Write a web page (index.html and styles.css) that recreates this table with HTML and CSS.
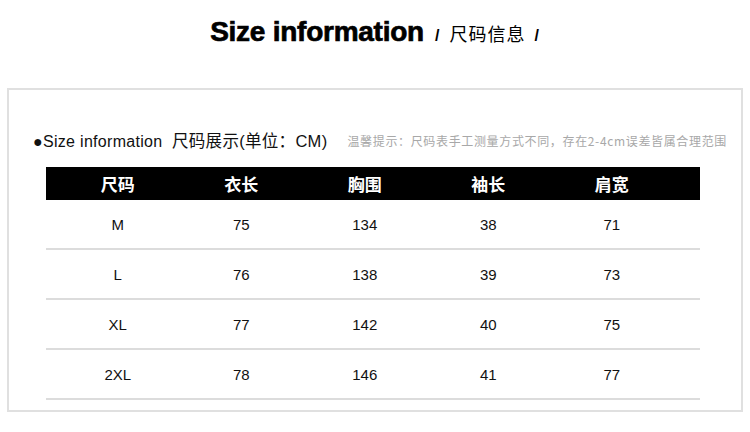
FILE: index.html
```html
<!DOCTYPE html>
<html lang="zh-CN">
<head>
<meta charset="utf-8">
<link rel="stylesheet" href="styles.css">
</head>
<body>
<div class="page">
  <h1 class="title"><span class="title-en">Size information</span><span class="title-cn"><span class="slash">/</span>尺码信息<span class="slash">/</span></span></h1>
  <div class="box">
    <div class="caption">
      <span class="cap-main">●Size information&nbsp;&nbsp;<span class="cap-cn">尺码展示(单位：CM)</span></span>
      <span class="cap-note">温馨提示：尺码表手工测量方式不同，存在2-4cm误差皆属合理范围</span>
    </div>
    <div class="table">
      <div class="row head"><span>尺码</span><span>衣长</span><span>胸围</span><span>袖长</span><span>肩宽</span></div>
      <div class="row"><span>M</span><span>75</span><span>134</span><span>38</span><span>71</span></div>
      <div class="row"><span>L</span><span>76</span><span>138</span><span>39</span><span>73</span></div>
      <div class="row"><span>XL</span><span>77</span><span>142</span><span>40</span><span>75</span></div>
      <div class="row"><span>2XL</span><span>78</span><span>146</span><span>41</span><span>77</span></div>
    </div>
  </div>
</div>
</body>
</html>
```
FILE: styles.css
```css
* { box-sizing: border-box; margin: 0; padding: 0; }
html, body { background: #fff; }
body { width: 750px; height: 432px; overflow: hidden; font-family: "Liberation Sans", "Noto Sans CJK SC", sans-serif; color: #111; }
.page { padding-top: 16px; }
.title { display: flex; justify-content: center; align-items: baseline; gap: 11px; height: 36px; font-weight: normal; }
.title-en { font-size: 28px; font-weight: bold; font-family: "Liberation Sans", "DejaVu Sans", sans-serif; letter-spacing: -0.25px; color: #000; -webkit-text-stroke: 0.7px #000; }
.title-cn { display: flex; align-items: baseline; font-size: 18px; letter-spacing: 1px; font-family: "Noto Sans CJK SC", sans-serif; color: #000; }
.slash { font-family: "Liberation Sans", sans-serif; font-weight: bold; font-size: 16px; }
.title-cn .slash:first-child { margin-right: 9px; }
.title-cn .slash:last-child { margin-left: 9px; }
.box { margin: 36px 7px 0 7px; height: 324px; border: 2px solid #e0e0e0; padding-top: 39px; }
.caption { display: flex; align-items: center; padding-left: 24px; height: 22px; }
.cap-main { font-size: 16px; font-family: "Liberation Sans", "Noto Sans CJK SC", sans-serif; color: #111; letter-spacing: 0.3px; }
.cap-cn { font-size: 16.5px; letter-spacing: 0.3px; }
.cap-note { margin-left: 20px; font-size: 12px; letter-spacing: 0.65px; color: #a8a8a8; font-family: "Noto Sans CJK SC", sans-serif; }
.table { margin: 16px 0 0 37px; width: 654px; }
.row { display: grid; grid-template-columns: 10px repeat(5, 123.5px); height: 50px; align-items: center; border-bottom: 2px solid #dcdcdc; font-size: 15px; }
.row::before { content: ""; }
.row span { text-align: center; }
.row.head { height: 33px; background: #000; color: #fff; border-bottom: none; font-size: 17px; font-weight: bold; font-family: "Noto Sans CJK SC", sans-serif; }
```
